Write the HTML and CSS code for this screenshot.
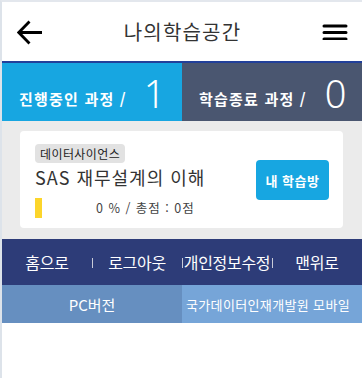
FILE: index.html
```html
<!DOCTYPE html>
<html lang="ko">
<head>
<meta charset="utf-8">
<link rel="stylesheet" href="styles.css">
</head>
<body>
<div class="page">
  <header class="top">
    <svg class="back" width="26" height="25" viewBox="0 0 26 25"><path d="M25 12.5H2M12.5 1.5L1.8 12.5L12.5 23.5" fill="none" stroke="#000" stroke-width="2.8"/></svg>
    <h1 class="title">나의학습공간</h1>
    <svg class="menu" width="26" height="16" viewBox="0 0 26 16"><path d="M2 2H24M2 8.5H24M2 15H24" stroke="#000" stroke-width="3" stroke-linecap="round"/></svg>
  </header>
  <section class="stats">
    <div class="stat stat-on"><span class="label">진행중인 과정 /</span><span class="num">1</span></div>
    <div class="stat stat-off"><span class="label">학습종료 과정 /</span><span class="num">0</span></div>
  </section>
  <section class="list">
    <div class="card">
      <div class="info">
        <span class="tag">데이터사이언스</span>
        <div class="course">SAS 재무설계의 이해</div>
        <div class="progress"><span class="bar"></span><span class="score">0 % / 총점 : 0점</span></div>
      </div>
      <a class="btn">내 학습방</a>
    </div>
  </section>
  <nav class="nav">
    <a>홈으로</a><a class="sep">로그아웃</a><a class="sep">개인정보수정</a><a class="sep">맨위로</a>
  </nav>
  <div class="foot">
    <a class="pc">PC버전</a><a class="mobile">국가데이터인재개발원 모바일</a>
  </div>
</div>
</body>
</html>
```
FILE: styles.css
```css
html, body { margin: 0; padding: 0; background: #fff; }
body { font-family: "Noto Sans CJK KR", "Noto Sans", sans-serif; }
.page { border-left: 2px solid #dde3ea; border-top: 2px solid #e3e7ed; min-height: 376px; overflow: hidden; }
.top { height: 59px; display: flex; align-items: center; justify-content: space-between; padding: 0 14px 0 15px; border-bottom: 2px solid #22409a; }
.back { margin-top: 1px; }
.title { margin: 0; font-size: 20px; font-weight: 400; color: #333; letter-spacing: 1.2px; padding-left: 0; }
.stats { display: grid; grid-template-columns: 1fr 1fr; height: 58px; }
.stat { display: flex; align-items: flex-end; padding-left: 17px; color: #fff; }
.stat-on { background: #17a6e1; }
.stat-off { background: #4a5670; }
.label { font-size: 15px; font-weight: 700; padding-bottom: 12px; letter-spacing: 1.2px; }
.num { font-size: 38px; font-weight: 300; line-height: 1; margin-left: 17px; padding-bottom: 9px; font-family: "Noto Sans", sans-serif; }
.stat-off .num { margin-left: 18px; }
.list { background: #ebebeb; padding: 10px 19px 11px 18px; }
.card { background: #fff; border-radius: 4px; height: 97px; display: flex; align-items: center; justify-content: space-between; padding: 0 14px 0 15px; box-sizing: border-box; }
.info { display: flex; flex-direction: column; align-items: flex-start; padding-top: 2px; }
.tag { background: #e2e2e2; border-radius: 4px; font-size: 12px; color: #222; padding: 0 5px; height: 19px; line-height: 19px; letter-spacing: 0.4px; }
.course { font-size: 18px; color: #333; margin-top: 2px; line-height: 24px; letter-spacing: 1px; }
.progress { display: flex; align-items: center; margin-top: 9px; }
.bar { width: 7px; height: 20px; background: #fcd52b; }
.score { font-size: 12.5px; color: #444; margin-left: 54px; letter-spacing: 1px; }
.btn { background: #17a6e1; color: #fff; font-weight: 700; font-size: 13px; border-radius: 4px; width: 73px; height: 40px; display: flex; align-items: center; justify-content: center; margin-top: 1px; letter-spacing: 0.5px; }
.nav { background: #2d3c78; height: 46px; display: grid; grid-template-columns: repeat(4, 1fr); align-items: center; }
.nav a { color: #fff; font-size: 16px; text-align: center; position: relative; white-space: nowrap; letter-spacing: -0.3px; }
.nav a.sep::before { content: ""; position: absolute; left: 0; top: 50%; width: 1px; height: 10px; margin-top: -4px; background: #c8cbd8; }
.foot { display: grid; grid-template-columns: 1fr 1fr; height: 38px; }
.foot a { color: #fff; font-size: 15px; display: flex; align-items: center; white-space: nowrap; overflow: hidden; }
.pc { background: #668fc0; justify-content: center; }
.foot .mobile { background: #76a5d8; padding-left: 4px; font-size: 13px; letter-spacing: 0.35px; }
```
